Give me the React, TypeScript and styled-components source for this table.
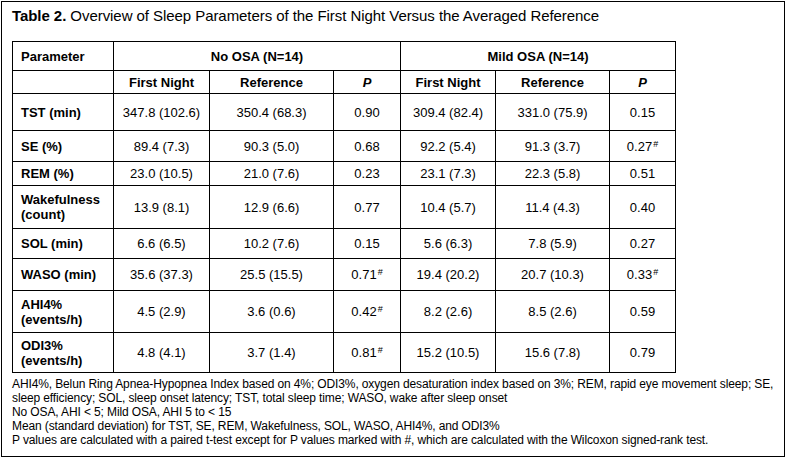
import { FC } from 'react';
import styled, { createGlobalStyle } from 'styled-components';

type Row = {
  label: string[];
  height: number;
  noOsa: [string, string, string, boolean];
  mildOsa: [string, string, string, boolean];
};

const rows: Row[] = [
  { label: ['TST (min)'], height: 37, noOsa: ['347.8 (102.6)', '350.4 (68.3)', '0.90', false], mildOsa: ['309.4 (82.4)', '331.0 (75.9)', '0.15', false] },
  { label: ['SE (%)'], height: 31, noOsa: ['89.4 (7.3)', '90.3 (5.0)', '0.68', false], mildOsa: ['92.2 (5.4)', '91.3 (3.7)', '0.27', true] },
  { label: ['REM (%)'], height: 24, noOsa: ['23.0 (10.5)', '21.0 (7.6)', '0.23', false], mildOsa: ['23.1 (7.3)', '22.3 (5.8)', '0.51', false] },
  { label: ['Wakefulness', '(count)'], height: 43, noOsa: ['13.9 (8.1)', '12.9 (6.6)', '0.77', false], mildOsa: ['10.4 (5.7)', '11.4 (4.3)', '0.40', false] },
  { label: ['SOL (min)'], height: 30, noOsa: ['6.6 (6.5)', '10.2 (7.6)', '0.15', false], mildOsa: ['5.6 (6.3)', '7.8 (5.9)', '0.27', false] },
  { label: ['WASO (min)'], height: 32, noOsa: ['35.6 (37.3)', '25.5 (15.5)', '0.71', true], mildOsa: ['19.4 (20.2)', '20.7 (10.3)', '0.33', true] },
  { label: ['AHI4%', '(events/h)'], height: 42, noOsa: ['4.5 (2.9)', '3.6 (0.6)', '0.42', true], mildOsa: ['8.2 (2.6)', '8.5 (2.6)', '0.59', false] },
  { label: ['ODI3%', '(events/h)'], height: 40, noOsa: ['4.8 (4.1)', '3.7 (1.4)', '0.81', true], mildOsa: ['15.2 (10.5)', '15.6 (7.8)', '0.79', false] },
];

const notes = [
  'AHI4%, Belun Ring Apnea-Hypopnea Index based on 4%; ODI3%, oxygen desaturation index based on 3%; REM, rapid eye movement sleep; SE,',
  'sleep efficiency; SOL, sleep onset latency; TST, total sleep time; WASO, wake after sleep onset',
  'No OSA, AHI < 5; Mild OSA, AHI 5 to < 15',
  'Mean (standard deviation) for TST, SE, REM, Wakefulness, SOL, WASO, AHI4%, and ODI3%',
  'P values are calculated with a paired t-test except for P values marked with #, which are calculated with the Wilcoxon signed-rank test.',
];

const colWidths = [101, 96, 124, 67, 95, 114, 66];

const GroupCells: FC<{ values: [string, string, string, boolean] }> = ({ values }) => (
  <>
    <Cell>{values[0]}</Cell>
    <Cell>{values[1]}</Cell>
    <Cell>
      {values[2]}
      {values[3] && <Mark>#</Mark>}
    </Cell>
  </>
);

const App: FC = () => (
  <>
    <GlobalStyle />
    <Frame>
      <Caption>
        <strong>Table 2.</strong> Overview of Sleep Parameters of the First Night Versus the Averaged Reference
      </Caption>
      <DataTable>
        <colgroup>
          {colWidths.map((w, i) => (
            <col key={i} style={{ width: w }} />
          ))}
        </colgroup>
        <tbody>
          <TableRow $height={29}>
            <HeadCell $left>Parameter</HeadCell>
            <HeadCell colSpan={3}>No OSA (N=14)</HeadCell>
            <HeadCell colSpan={3}>Mild OSA (N=14)</HeadCell>
          </TableRow>
          <TableRow $height={23}>
            <HeadCell $left />
            <HeadCell>First Night</HeadCell>
            <HeadCell>Reference</HeadCell>
            <HeadCell>
              <em>P</em>
            </HeadCell>
            <HeadCell>First Night</HeadCell>
            <HeadCell>Reference</HeadCell>
            <HeadCell>
              <em>P</em>
            </HeadCell>
          </TableRow>
          {rows.map((row) => (
            <TableRow key={row.label.join(' ')} $height={row.height}>
              <HeadCell $left>
                {row.label.map((l, i) => (
                  <LabelLine key={i}>{l}</LabelLine>
                ))}
              </HeadCell>
              <GroupCells values={row.noOsa} />
              <GroupCells values={row.mildOsa} />
            </TableRow>
          ))}
        </tbody>
      </DataTable>
      <Notes>
        {notes.map((n) => (
          <NoteLine key={n}>{n}</NoteLine>
        ))}
      </Notes>
    </Frame>
  </>
);

export default App;

const GlobalStyle = createGlobalStyle`
  body {
    margin: 0;
    background: #fff;
    color: #000;
    font-family: 'Liberation Sans', Arial, sans-serif;
  }
`;

const Frame = styled.div`
  box-sizing: border-box;
  margin: 1px 0 0 1px;
  width: 784px;
  height: 456px;
  border: 1px solid #000;
  padding: 5px 0 0 10px;
  display: flex;
  flex-direction: column;
`;

const Caption = styled.p`
  margin: 0;
  font-size: 15px;
  line-height: 18px;
  letter-spacing: -0.06px;
  white-space: nowrap;
`;

const DataTable = styled.table`
  margin-top: 16px;
  border-collapse: collapse;
  table-layout: fixed;
  width: 664px;
  font-size: 13px;
  line-height: 15px;
`;

const TableRow = styled.tr<{ $height: number }>`
  height: ${(p) => p.$height}px;
`;

const Cell = styled.td`
  border: 1px solid #000;
  padding: 0 6px;
  text-align: center;
  vertical-align: middle;
  white-space: nowrap;
`;

const HeadCell = styled(Cell)<{ $left?: boolean }>`
  font-weight: bold;
  text-align: ${(p) => (p.$left ? 'left' : 'center')};
  padding-left: ${(p) => (p.$left ? '8px' : '6px')};
`;

const LabelLine = styled.span`
  display: block;
`;

const Mark = styled.sup`
  font-size: 9px;
  line-height: 0;
  vertical-align: 4px;
  margin-left: 1px;
`;

const Notes = styled.div`
  margin-top: 4px;
  font-size: 12px;
  line-height: 14px;
  letter-spacing: -0.12px;
`;

const NoteLine = styled.div`
  white-space: nowrap;
`;
